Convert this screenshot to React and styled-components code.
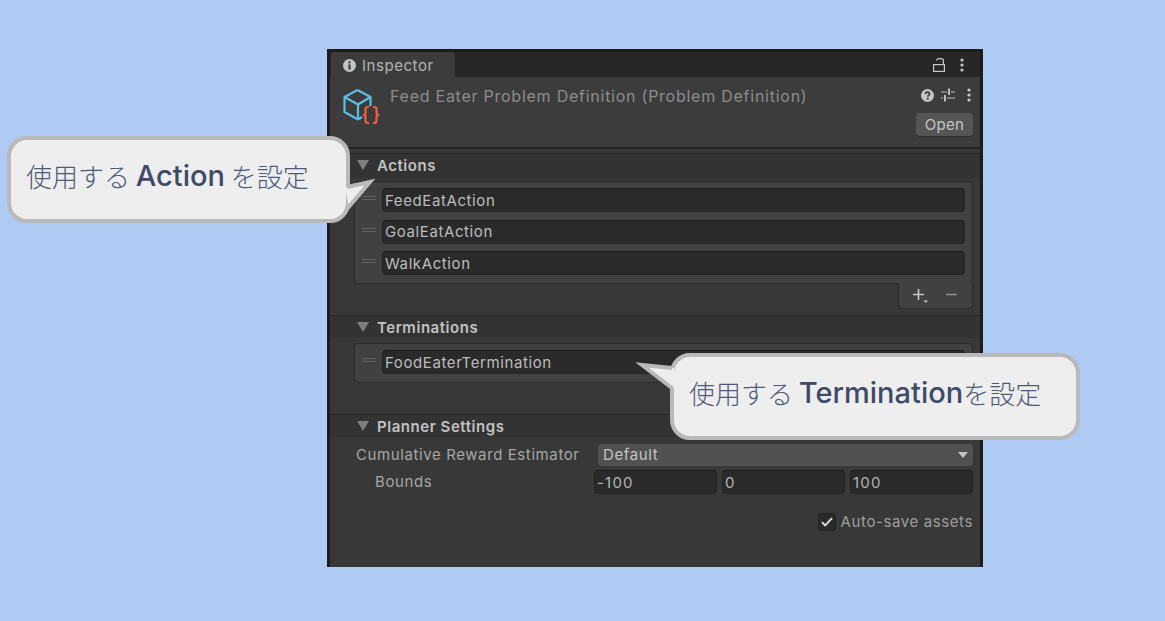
import React from "react";
import styled, { createGlobalStyle } from "styled-components";

const UI_FONT = `Inter, "Noto Sans", sans-serif`;
const CALLOUT_FONT = `"Noto Sans CJK JP", sans-serif`;

const GlobalStyle = createGlobalStyle`
  html, body {
    margin: 0;
    padding: 0;
    background: #afcbf3;
  }
  * {
    box-sizing: border-box;
  }
`;

const Page = styled.div`
  position: relative;
  width: 1165px;
  height: 621px;
  overflow: hidden;
  padding: 49px 0 0 327px;
  background: #afcbf3;
  font-family: ${UI_FONT};
`;

const Inspector = styled.div`
  width: 656px;
  height: 518px;
  display: flex;
  flex-direction: column;
  background: #383838;
  border-top: 3px solid #1c1c1c;
  border-left: 3px solid #1c1c1c;
  border-right: 3px solid #1c1c1c;
`;

const TabBar = styled.div`
  height: 25px;
  display: flex;
  align-items: stretch;
  justify-content: space-between;
  padding: 0 16px 0 1px;
  background: #272727;
`;

const Tab = styled.div`
  width: 124px;
  display: flex;
  align-items: center;
  gap: 6px;
  padding: 1px 0 0 12px;
  background: #3c3c3c;
  border-radius: 4px 4px 0 0;
  color: #b4b4b4;
  font-size: 15px;
  letter-spacing: 0.55px;
`;

const TabActions = styled.div`
  display: flex;
  align-items: center;
  gap: 15px;
  padding-top: 1px;
`;

const Header = styled.div`
  height: 72px;
  display: flex;
  padding: 10px 7px 0 13px;
  background: #3c3c3c;
  border-bottom: 2px solid #242424;
`;

const Title = styled.div`
  flex: 1;
  margin: 0 0 0 9px;
  color: #8c8c8c;
  font-size: 16px;
  line-height: 18px;
  letter-spacing: 0.75px;
`;

const HeaderSide = styled.div`
  display: flex;
  flex-direction: column;
  align-items: flex-end;
  gap: 10px;
`;

const HeaderIcons = styled.div`
  height: 16px;
  display: flex;
  align-items: center;
  gap: 7px;
  padding-right: 2px;

  & > :last-child {
    margin-left: 5px;
  }
`;

const OpenButton = styled.div`
  width: 57px;
  height: 23px;
  display: flex;
  align-items: center;
  justify-content: center;
  background: #555555;
  border-radius: 4px;
  box-shadow: 0 1px 0 #2c2c2c;
  color: #c6c6c6;
  font-size: 15px;
  letter-spacing: 0.3px;
`;

const SectionHeader = styled.div`
  height: ${(p) => p.$height}px;
  margin-top: ${(p) => p.$top}px;
  display: flex;
  align-items: center;
  gap: 8px;
  padding: 0 0 ${(p) => p.$lift || 0}px 27px;
  background: #333333;
  border-top: 1px solid #272727;
  color: #c2c2c2;
  font-size: 15px;
  font-weight: 600;
  letter-spacing: 0.55px;
`;

const Triangle = styled.span`
  width: 0;
  height: 0;
  border-left: 6px solid transparent;
  border-right: 6px solid transparent;
  border-top: 10px solid #7e7e7e;
`;

const ListPanel = styled.div`
  margin: ${(p) => p.$top}px 7px 0 24px;
  display: flex;
  flex-direction: column;
  gap: 7.5px;
  padding: 6px 7px 8px 7px;
  background: #414141;
  border: 1px solid #2b2b2b;
  border-radius: 4px;
`;

const ListRow = styled.div`
  display: flex;
  align-items: stretch;
  gap: 6px;
`;

const Handle = styled.span`
  width: 14px;
  height: 4px;
  margin-top: 8px;
  border-top: 1px solid #626262;
  border-bottom: 1px solid #626262;
`;

const Field = styled.div`
  flex: 1;
  height: 24px;
  display: flex;
  align-items: center;
  padding-left: 2px;
  background: #2a2a2a;
  border: 1px solid #232323;
  border-top-color: #1b1b1b;
  border-radius: 4px;
  color: #bcbcbc;
  font-size: 15px;
  letter-spacing: 0.6px;
`;

const ListFooter = styled.div`
  width: 75px;
  height: 26px;
  margin: -1px 7px ${(p) => p.$bottom}px auto;
  display: flex;
  align-items: center;
  gap: 17px;
  padding: 0 0 0 13px;
  background: #414141;
  border: 1px solid #2b2b2b;
  border-top: 0;
  border-radius: 0 0 4px 4px;
`;

const Settings = styled.div`
  display: flex;
  flex-direction: column;
  padding: 7px 7px 0 26px;
`;

const SettingRow = styled.div`
  height: ${(p) => p.$height}px;
  margin-top: ${(p) => p.$top || 0}px;
  display: flex;
  align-items: center;
  justify-content: space-between;
`;

const Label = styled.span`
  padding: 0 0 1px ${(p) => p.$indent || 0}px;
  color: #a6a6a6;
  font-size: 15px;
  letter-spacing: 0.6px;
`;

const Dropdown = styled.div`
  width: 375px;
  height: 22px;
  display: flex;
  align-items: center;
  justify-content: space-between;
  padding: 0 5px 1px;
  background: #515151;
  border-radius: 4px;
  color: #c4c4c4;
  font-size: 15px;
  letter-spacing: 0.6px;
`;

const DropArrow = styled.span`
  width: 0;
  height: 0;
  border-left: 5px solid transparent;
  border-right: 5px solid transparent;
  border-top: 6px solid #c4c4c4;
`;

const BoundsFields = styled.div`
  width: 379px;
  display: flex;
  gap: 5px;
`;

const BoundsField = styled(Field)`
  padding: 1px 0 0 2px;
  color: #b4b4b4;
  letter-spacing: 1.2px;
`;

const AutoSave = styled.div`
  display: flex;
  align-items: center;
  justify-content: flex-end;
  gap: 5px;
  margin-top: 18px;
  color: #9e9e9e;
  font-size: 15px;
  letter-spacing: 0.6px;
`;

const CheckBox = styled.span`
  width: 18px;
  height: 18px;
  display: flex;
  align-items: center;
  justify-content: center;
  background: #2a2a2a;
  border: 1px solid #222222;
  border-radius: 3px;
`;

const Callout = styled.div`
  position: absolute;
  left: ${(p) => p.$left}px;
  top: ${(p) => p.$top}px;
  width: ${(p) => p.$width}px;
  height: 87px;
  display: flex;
  align-items: center;
  padding-left: ${(p) => p.$pad}px;
  padding-bottom: 8px;
  background: #eeeeee;
  border: 4px solid #b9b9b9;
  border-radius: 20px;
  color: #4d5a78;
  font-family: ${CALLOUT_FONT};
  font-size: 26px;
  font-weight: 300;
  white-space: pre;
`;

const CalloutWord = styled.span`
  color: #3f4a68;
  font-family: Inter, sans-serif;
  font-size: 29px;
  font-weight: 500;
`;

const Tail = styled.svg`
  position: absolute;
  left: ${(p) => p.$left}px;
  top: ${(p) => p.$top}px;
  overflow: visible;
`;

const InfoIcon = () => (
  <svg width="13" height="13" viewBox="0 0 13 13">
    <circle cx="6.5" cy="6.5" r="6.5" fill="#c4c4c4" />
    <rect x="5.4" y="2.3" width="2.2" height="2" fill="#3c3c3c" />
    <rect x="5.4" y="5.4" width="2.2" height="5.2" fill="#3c3c3c" />
  </svg>
);

const LockIcon = () => (
  <svg width="12" height="14" viewBox="0 0 12 14" fill="none" stroke="#c8c8c8" strokeWidth="1.2">
    <rect x="0.6" y="6.6" width="10.8" height="6.8" />
    <path d="M10.4 6.5V2.8C10.4 1.4 9.6 0.7 8 0.7H6C4.4 0.7 3.8 1.4 3.6 2.6" />
  </svg>
);

const DotsIcon = () => (
  <svg width="4" height="14" viewBox="0 0 4 14" fill="#c8c8c8">
    <circle cx="2" cy="2" r="1.6" />
    <circle cx="2" cy="7" r="1.6" />
    <circle cx="2" cy="12" r="1.6" />
  </svg>
);

const HelpIcon = () => (
  <svg width="13" height="13" viewBox="0 0 13 13">
    <circle cx="6.5" cy="6.5" r="6.5" fill="#c4c4c4" />
    <path d="M4.4 5C4.5 3.8 5.3 3.2 6.5 3.2C7.8 3.2 8.6 3.9 8.6 4.9C8.6 6.2 6.8 6.2 6.8 7.7" fill="none" stroke="#3c3c3c" strokeWidth="1.7" />
    <rect x="5.8" y="8.8" width="1.9" height="1.8" fill="#3c3c3c" />
  </svg>
);

const SlidersIcon = () => (
  <svg width="14" height="14" viewBox="0 0 14 14" fill="none" stroke="#bdbdbd" strokeWidth="1.2">
    <path d="M0 4H6M10 4H14M0 10H2M6 10H14" />
    <path d="M8 0.5V7M4 7V13.5" strokeWidth="2" />
  </svg>
);

const AssetIcon = () => (
  <svg width="38" height="38" viewBox="0 0 38 38" fill="none">
    <path
      d="M14.5 3L27.5 10V19M14.5 3L1.5 10V25L15 32.5M1.5 10L15 17.5V32.5M15 17.5L27.5 10M15 32.5L19 30"
      stroke="#5cbde6"
      strokeWidth="2.2"
      strokeLinejoin="round"
    />
    <path
      d="M26 20H24.5C23 20 22.5 21 22.5 22.5V26C22.5 27.5 21.5 28 20 28C21.5 28 22.5 28.5 22.5 30V33.5C22.5 35 23 36 24.5 36H26M30 20H31.5C33 20 33.5 21 33.5 22.5V26C33.5 27.5 34.5 28 36 28C34.5 28 33.5 28.5 33.5 30V33.5C33.5 35 33 36 31.5 36H30"
      stroke="#f0603a"
      strokeWidth="2.2"
    />
  </svg>
);

const PlusIcon = () => (
  <svg width="17" height="16" viewBox="0 0 17 16">
    <path d="M6.5 1V12M1 6.5H12" stroke="#c8c8c8" strokeWidth="1.6" />
    <path d="M11.5 12.5H16L13.75 15Z" fill="#c8c8c8" />
  </svg>
);

const MinusIcon = () => (
  <svg width="11" height="16" viewBox="0 0 11 16">
    <path d="M0 6.5H11" stroke="#8e8e8e" strokeWidth="1.6" />
  </svg>
);

const CheckIcon = () => (
  <svg width="12" height="10" viewBox="0 0 12 10" fill="none">
    <path d="M1 5.2L4.2 8.4L11 1.2" stroke="#e0e0e0" strokeWidth="1.9" />
  </svg>
);

const ObjectList = ({ items, top, bottom }) => (
  <>
    <ListPanel $top={top}>
      {items.map((item) => (
        <ListRow key={item}>
          <Handle />
          <Field>{item}</Field>
        </ListRow>
      ))}
    </ListPanel>
    <ListFooter $bottom={bottom}>
      <PlusIcon />
      <MinusIcon />
    </ListFooter>
  </>
);

const App = () => {
  return (
    <Page>
      <GlobalStyle />
      <Inspector>
        <TabBar>
          <Tab>
            <InfoIcon />
            Inspector
          </Tab>
          <TabActions>
            <LockIcon />
            <DotsIcon />
          </TabActions>
        </TabBar>
        <Header>
          <AssetIcon />
          <Title>Feed Eater Problem Definition (Problem Definition)</Title>
          <HeaderSide>
            <HeaderIcons>
              <HelpIcon />
              <SlidersIcon />
              <DotsIcon />
            </HeaderIcons>
            <OpenButton>Open</OpenButton>
          </HeaderSide>
        </Header>

        <SectionHeader $height={25} $top={4} $lift={2}>
          <Triangle />
          Actions
        </SectionHeader>
        <ObjectList items={["FeedEatAction", "GoalEatAction", "WalkAction"]} top={3} bottom={6} />

        <SectionHeader $height={23} $top={0}>
          <Triangle />
          Terminations
        </SectionHeader>
        <ObjectList items={["FoodEaterTermination"]} top={5} bottom={6} />

        <SectionHeader $height={23} $top={0}>
          <Triangle />
          Planner Settings
        </SectionHeader>
        <Settings>
          <SettingRow $height={22}>
            <Label>Cumulative Reward Estimator</Label>
            <Dropdown>
              Default
              <DropArrow />
            </Dropdown>
          </SettingRow>
          <SettingRow $height={24} $top={4}>
            <Label $indent={19}>Bounds</Label>
            <BoundsFields>
              <BoundsField>-100</BoundsField>
              <BoundsField>0</BoundsField>
              <BoundsField>100</BoundsField>
            </BoundsFields>
          </SettingRow>
          <AutoSave>
            <CheckBox>
              <CheckIcon />
            </CheckBox>
            Auto-save assets
          </AutoSave>
        </Settings>
      </Inspector>

      <Callout $left={7} $top={136} $width={343} $pad={15}>
        使用する <CalloutWord>Action</CalloutWord> を設定
      </Callout>
      <Tail $left={345} $top={180} width="30" height="32">
        <path d="M0 7L25 2L4 28Z" fill="#eeeeee" />
        <path d="M2 7L25 2L2 29" fill="none" stroke="#b9b9b9" strokeWidth="4" strokeLinejoin="miter" />
      </Tail>

      <Callout $left={670} $top={353} $width={410} $pad={15}>
        使用する <CalloutWord>Termination</CalloutWord>を設定
      </Callout>
      <Tail $left={638} $top={363} width="38" height="28">
        <path d="M36 5L4 2L36 25Z" fill="#eeeeee" />
        <path d="M34 5L4 2L34 25" fill="none" stroke="#b9b9b9" strokeWidth="4" strokeLinejoin="miter" />
      </Tail>
    </Page>
  );
};

export default App;
